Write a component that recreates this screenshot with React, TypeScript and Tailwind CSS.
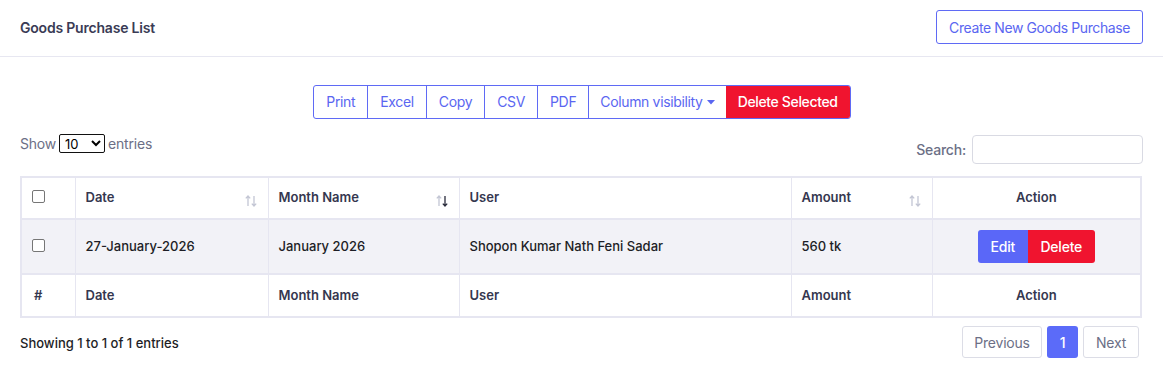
import React from 'react'

const cols = [
  { key: 'chk', w: 'w-[54px]' },
  { key: 'date', w: 'w-[193px]' },
  { key: 'month', w: 'w-[191px]' },
  { key: 'user', w: 'w-[332px]' },
  { key: 'amount', w: 'w-[141px]' },
  { key: 'action', w: '' },
]

function SortIcon({ active }: { active?: boolean }) {
  return (
    <svg width="14" height="14" viewBox="0 0 14 14" className="shrink-0">
      <path d="M4 12V2M1.8 4.4 4 2l2.2 2.4" stroke="#c3c6d4" strokeWidth="1.3" fill="none" />
      <path
        d="M10 2v10M7.8 9.6 10 12l2.2-2.4"
        stroke={active ? '#2a2c3c' : '#c3c6d4'}
        strokeWidth="1.3"
        fill="none"
      />
    </svg>
  )
}

function Checkbox() {
  return <span className="inline-block w-[13px] h-[13px] border border-[#767676] rounded-[2px] bg-white" />
}

export default function App() {
  const tools = ['Print', 'Excel', 'Copy', 'CSV', 'PDF']
  return (
    <div className="w-[1163px] h-[380px] bg-white font-['Inter','Liberation_Sans',sans-serif]">
      <div className="bg-white rounded-b-md">
        {/* header */}
        <div className="h-[57px] flex items-center justify-between px-5 border-b border-[#e7e7f1]">
          <h1 className="text-[14px] font-semibold text-[#3a3b55] -mt-[1px] tracking-[-0.2px]">Goods Purchase List</h1>
          <button className="h-[34px] px-[12px] border border-[#5f6af5] rounded-[3px] text-[14px] tracking-[-0.4px] text-[#5a66f1] -mt-[2px]">
            Create New Goods Purchase
          </button>
        </div>

        <div className="px-5 pt-7">
          {/* toolbar */}
          <div className="flex justify-center">
            <div className="flex h-[34px] border border-[#5f6af5] rounded-[3px] overflow-hidden text-[14px] tracking-[-0.35px] text-[#5a66f1] ml-[1px]">
              {tools.map((t) => (
                <button key={t} className="px-[12px] border-r border-[#5f6af5] leading-none">
                  {t}
                </button>
              ))}
              <button className="px-[11px] flex items-center gap-1 leading-none">
                Column visibility
                <svg width="8" height="5" viewBox="0 0 8 5"><path d="M0 0h8L4 4.5z" fill="#5a66f1" /></svg>
              </button>
              <button className="px-[12px] bg-[#f0142f] text-white font-medium leading-none">Delete Selected</button>
            </div>
          </div>

          {/* show / search */}
          <div className="flex justify-between items-start mt-[16px] text-[14px] text-[#6c6f86] tracking-[-0.2px]">
            <div className="flex items-center gap-[3px] -mt-[2px]">
              <span>Show</span>
              <select className="h-[19px] w-[46px] border border-[#111] rounded-[2px] text-[13px] text-black px-[1px] bg-white">
                <option>10</option>
              </select>
              <span>entries</span>
            </div>
            <div className="flex items-center gap-[6px]">
              <span className="font-medium">Search:</span>
              <input className="w-[171px] h-[29px] border border-[#d9dae3] rounded-[4px]" />
            </div>
          </div>

          {/* table */}
          <table className="mt-[12px] w-[1122px] border-collapse border-2 border-[#e6e6f1] text-[13px] table-fixed">
            <colgroup>
              {cols.map((c) => (
                <col key={c.key} className={c.w} />
              ))}
            </colgroup>
            <thead>
              <tr className="h-[42px] text-[#35374f] font-semibold border-b-2 border-[#e6e6f1]">
                <th className="border border-[#e6e6f1] px-[10px] text-left">
                  <div className="flex pb-[3px]"><Checkbox /></div>
                </th>
                <th className="border border-[#e6e6f1] px-[10px] text-left font-semibold">
                  <div className="flex items-center justify-between">
                    Date <span className="translate-y-[3px]"><SortIcon /></span>
                  </div>
                </th>
                <th className="border border-[#e6e6f1] px-[10px] text-left font-semibold">
                  <div className="flex items-center justify-between">
                    Month Name <span className="translate-y-[3px]"><SortIcon active /></span>
                  </div>
                </th>
                <th className="border border-[#e6e6f1] px-[10px] text-left font-semibold">User</th>
                <th className="border border-[#e6e6f1] px-[10px] text-left font-semibold">
                  <div className="flex items-center justify-between">
                    Amount <span className="translate-y-[3px]"><SortIcon /></span>
                  </div>
                </th>
                <th className="border border-[#e6e6f1] px-[10px] text-center font-semibold">Action</th>
              </tr>
            </thead>
            <tbody>
              <tr className="h-[55px] bg-[#f2f2f7] text-[#1d1e26] font-medium border-b-2 border-[#e6e6f1]">
                <td className="border border-[#e6e6f1] px-[10px]">
                  <div className="flex pb-[3px]"><Checkbox /></div>
                </td>
                <td className="border border-[#e6e6f1] px-[10px]">27-January-2026</td>
                <td className="border border-[#e6e6f1] px-[10px]">January 2026</td>
                <td className="border border-[#e6e6f1] px-[10px]">Shopon Kumar Nath Feni Sadar</td>
                <td className="border border-[#e6e6f1] px-[10px]">560 tk</td>
                <td className="border border-[#e6e6f1] px-[10px]">
                  <div className="flex justify-center">
                    <div className="flex h-[33px] rounded-[3px] overflow-hidden text-white font-medium text-[14px] tracking-[-0.2px]">
                      <button className="w-[50px] bg-[#5a67f8]">Edit</button>
                      <button className="w-[67px] bg-[#f0142f]">Delete</button>
                    </div>
                  </div>
                </td>
              </tr>
            </tbody>
            <tfoot>
              <tr className="h-[43px] text-[#35374f] font-semibold">
                <th className="border border-[#e6e6f1] px-[10px] text-left font-semibold pl-[12px]">#</th>
                <th className="border border-[#e6e6f1] px-[10px] text-left font-semibold">Date</th>
                <th className="border border-[#e6e6f1] px-[10px] text-left font-semibold">Month Name</th>
                <th className="border border-[#e6e6f1] px-[10px] text-left font-semibold">User</th>
                <th className="border border-[#e6e6f1] px-[10px] text-left font-semibold">Amount</th>
                <th className="border border-[#e6e6f1] px-[10px] text-center font-semibold">Action</th>
              </tr>
            </tfoot>
          </table>

          {/* footer */}
          <div className="flex justify-between items-center mt-[8px] pb-[22px]">
            <span className="text-[13px] font-medium text-[#1d1e26] mt-[3px]">Showing 1 to 1 of 1 entries</span>
            <div className="flex gap-[5px] text-[14px] tracking-[-0.2px] mr-[4px]">
              <button className="h-[32px] w-[80px] border border-[#dcdde6] rounded-[3px] text-[#6c6f86]">Previous</button>
              <button className="h-[32px] w-[31px] rounded-[3px] bg-[#5b6bf9] text-white font-medium">1</button>
              <button className="h-[32px] w-[56px] border border-[#dcdde6] rounded-[3px] text-[#6c6f86]">Next</button>
            </div>
          </div>
        </div>
      </div>
    </div>
  )
}
